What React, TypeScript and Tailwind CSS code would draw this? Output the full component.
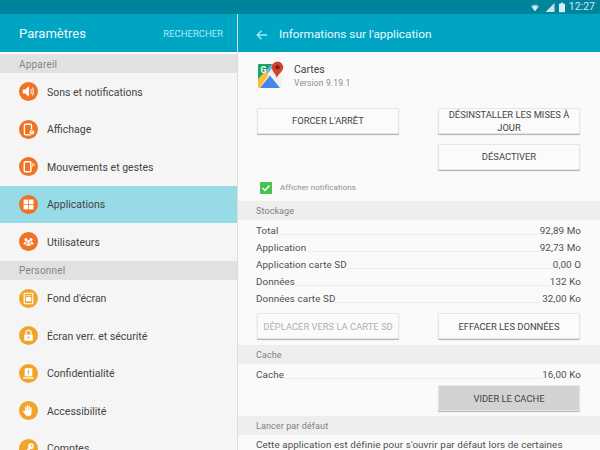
import React from "react";

function Speaker() {
  return (
    <svg viewBox="0 0 20 20" className="w-[19px] h-[19px]">
      <circle cx="10" cy="10" r="10" fill="#ee7322" />
      <path d="M4 7.800v4.400h2.500l4 3.300V4.500l-4 3.300z" fill="#fff" />
      <path d="M12.300 7q1.300 3 0 6M14.200 5.800q2.100 4.200 0 8.400" stroke="#fff" strokeOpacity="0.8" strokeWidth="1.200" fill="none" />
    </svg>
  );
}
function Display() {
  return (
    <svg viewBox="0 0 20 20" className="w-[19px] h-[19px]">
      <circle cx="10" cy="10" r="10" fill="#ee7322" />
      <rect x="5.700" y="4.500" width="7.500" height="11" rx="1" fill="none" stroke="#fff" strokeWidth="1.400" />
      <circle cx="13.500" cy="13" r="2.800" fill="#fff" stroke="#ee7322" strokeWidth="0.800" />
      <rect x="13.100" y="11.700" width="0.900" height="1.700" fill="#ee7322" />
    </svg>
  );
}
function Motion() {
  return (
    <svg viewBox="0 0 20 20" className="w-[19px] h-[19px]">
      <circle cx="10" cy="10" r="10" fill="#ee7322" />
      <rect x="5.500" y="5" width="7" height="10.500" rx="1" fill="none" stroke="#fff" strokeWidth="1.500" />
      <path d="M14.500 6.500v4M16 7v2" stroke="#fff" strokeWidth="1" />
    </svg>
  );
}
function Apps() {
  return (
    <svg viewBox="0 0 20 20" className="w-[19px] h-[19px]">
      <circle cx="10" cy="10" r="10" fill="#ee7322" />
      <rect x="4.800" y="4.800" width="4.800" height="4.800" fill="#fff" />
      <rect x="10.400" y="4.800" width="4.800" height="4.800" fill="#fff" />
      <rect x="4.800" y="10.400" width="4.800" height="4.800" fill="#fff" />
      <rect x="10.400" y="10.400" width="4.800" height="4.800" fill="#fff" />
    </svg>
  );
}
function Users() {
  return (
    <svg viewBox="0 0 20 20" className="w-[19px] h-[19px]">
      <circle cx="10" cy="10" r="10" fill="#ee7322" />
      <circle cx="7.300" cy="8" r="1.600" fill="#fff" />
      <circle cx="12.700" cy="8" r="1.600" fill="#fff" />
      <circle cx="10" cy="10" r="1.500" fill="#fff" />
      <path d="M4.500 13q.5-3 2.800-3 1 0 1.200.5-1.500 1-1.500 3zM15.500 13q-.5-3-2.800-3-1 0-1.200.5 1.500 1 1.500 3zM7.500 14.500q.3-3 2.500-3t2.500 3z" fill="#fff" />
    </svg>
  );
}
function Wallpaper() {
  return (
    <svg viewBox="0 0 20 20" className="w-[19px] h-[19px]">
      <circle cx="10" cy="10" r="10" fill="#f0a52a" />
      <rect x="5.500" y="4.500" width="9" height="11" rx="0.500" fill="none" stroke="#fff" strokeWidth="1.200" />
      <rect x="7.200" y="8.500" width="5.600" height="4.500" fill="#fff" />
      <rect x="7.200" y="6.500" width="5.600" height="1" fill="#fff" opacity="0.700" />
    </svg>
  );
}
function Lock() {
  return (
    <svg viewBox="0 0 20 20" className="w-[19px] h-[19px]">
      <circle cx="10" cy="10" r="10" fill="#f0a52a" />
      <rect x="5.500" y="9" width="9" height="6.500" rx="0.700" fill="#fff" />
      <path d="M7.300 9V7.300a2.700 2.700 0 0 1 5.400 0V9" fill="none" stroke="#fff" strokeWidth="1.300" />
      <circle cx="10" cy="12" r="1" fill="#f0a52a" />
    </svg>
  );
}
function Privacy() {
  return (
    <svg viewBox="0 0 20 20" className="w-[19px] h-[19px]">
      <circle cx="10" cy="10" r="10" fill="#f0a52a" />
      <rect x="6" y="4.500" width="8" height="8.500" fill="#fff" />
      <rect x="4.500" y="14" width="11" height="1.400" fill="#fff" />
      <rect x="9.300" y="6.500" width="1.400" height="3" fill="#f0a52a" />
      <rect x="9.300" y="10.200" width="1.400" height="1.300" fill="#f0a52a" />
    </svg>
  );
}
function Hand() {
  return (
    <svg viewBox="0 0 20 20" className="w-[19px] h-[19px]">
      <circle cx="10" cy="10" r="10" fill="#f0a52a" />
      <path d="M6.400 11V6.500a.7.7 0 0 1 1.400 0V10h.4V5a.7.7 0 0 1 1.400 0v5h.4V5.400a.7.7 0 0 1 1.400 0V10.300h.4V7a.7.7 0 0 1 1.400 0v5.500q0 3.500-3.500 3.500-2 0-3-1.500L4.500 11.500q-.5-1 .3-1.300.6-.2 1 .3z" fill="#fff" />
    </svg>
  );
}
function Key() {
  return (
    <svg viewBox="0 0 20 20" className="w-[19px] h-[19px]">
      <circle cx="10" cy="10" r="10" fill="#f0a52a" />
      <circle cx="12.500" cy="7.500" r="3" fill="#fff" />
      <path d="M11 8.500l-6 6 1.500 1.300 1-1 1 1 1-1-1-1 3.500-3.500z" fill="#fff" />
      <circle cx="13" cy="7" r="0.900" fill="#f0a52a" />
    </svg>
  );
}

function MapsIcon() {
  return (
    <svg viewBox="0 0 26 27" className="w-[26px] h-[27px] shrink-0 self-start">
      <rect x="0" y="3" width="23.500" height="24" rx="1" fill="#f1f1f1" />
      <path d="M0 4q0-1 1-1h13.500L0 18.500z" fill="#1ea362" />
      <path d="M14.500 3h3L9.500 13 7 10.500z" fill="#7daaf0" />
      <path d="M0 18.500L7 10.500l3.500 3.500L1.500 27Q0 27 0 25.500z" fill="#fbc02d" />
      <path d="M2 27l10-12.500L22 27z" fill="#4a86e8" />
      <text x="2.500" y="12" fontSize="8.500" fontWeight="700" fill="#fff" fontFamily="Roboto, sans-serif">G</text>
      <path d="M19.500 .5a5.800 5.800 0 0 0-5.800 5.800c0 4.200 5 7.500 5 11 .6-3.500 6.600-6.800 6.600-11A5.800 5.800 0 0 0 19.500 .5z" fill="#d8402f" />
      <circle cx="19.500" cy="6.300" r="2.200" fill="#7b2318" />
    </svg>
  );
}

function Row({ icon, label, active }: { icon: React.ReactNode; label: string; active?: boolean }) {
  return (
    <div className={`h-[37.5px] shrink-0 flex items-center pl-[19px] gap-[9px] text-[10.500px] text-[#444] ${active ? "bg-[#97dbe7]" : ""}`}>
      {icon}
      <span className="pt-[2px]">{label}</span>
    </div>
  );
}

function LeftHead({ children }: { children: string }) {
  return (
    <div className="h-[19px] shrink-0 flex items-center pl-[19px] pt-[1px] text-[10px] tracking-[0.2px] bg-[#e1e1e1] text-[#858585]">{children}</div>
  );
}

function RightHead({ children }: { children: string }) {
  return (
    <div className="h-[19px] shrink-0 flex items-center pl-[18px] pt-[2px] text-[9px] tracking-[0.1px] bg-[#eeeeee] text-[#808080]">{children}</div>
  );
}

function Btn({ children, disabled, pressed }: { children: React.ReactNode; disabled?: boolean; pressed?: boolean }) {
  return (
    <div
      className={`w-[142px] h-[26px] shrink-0 flex items-center justify-center text-center text-[9.400px] leading-[13px] rounded-[1px] border border-[#e6e6e6] shadow-[0_1px_1px_rgba(0,0,0,0.3)] ${
        pressed ? "bg-[#d2d2d2]" : "bg-[#fbfbfb]"
      } ${disabled ? "text-[#b0b0b0]" : "text-[#444]"}`}
    >
      {children}
    </div>
  );
}

function Stat({ label, value }: { label: string; value: string }) {
  return (
    <div className="h-[17px] shrink-0 flex items-end text-[9.800px] tracking-[0.1px] text-[#4f4f4f] leading-[15px]">
      <span>{label}</span>
      <span className="flex-1 border-b border-[#ececec] mb-[3px]" />
      <span>{value}</span>
    </div>
  );
}

export default function App() {
  return (
    <div className="w-[600px] h-[450px] overflow-hidden flex flex-col bg-[#fafafa] font-['Roboto',sans-serif]">
      <div className="h-[14px] shrink-0 bg-[#00849c] flex items-center justify-end pr-[5px] gap-[4px]">
        <svg viewBox="0 0 12 10" className="w-[10px] h-[9px]">
          <path d="M1 3.500a7 7 0 0 1 10 0L6 9.500z" fill="#7fc4d2" />
          <path d="M2.800 4.800a4.500 4.500 0 0 1 6.400 0L6 9.500z" fill="#d5eef3" />
        </svg>
        <svg viewBox="0 0 10 10" className="w-[10px] h-[10px] ml-[1px]">
          <path d="M0.500 10L9.500 1v9z" fill="#c5e5ec" />
        </svg>
        <svg viewBox="0 0 7 11" className="w-[6px] h-[11px]">
          <path d="M2 0h3v1h1.500q.5 0 .5.500V11H0V1.500Q0 1 .5 1H2z" fill="#d5eef3" />
        </svg>
        <span className="text-[10.500px] leading-none text-[#cfeaf0]">12:27</span>
      </div>
      <div className="flex-1 min-h-0 flex">
        <div className="w-[237px] shrink-0 flex flex-col overflow-hidden bg-[#f5f5f5]">
          <div className="h-[38px] shrink-0 bg-[#00a5c4] flex items-center justify-between pl-[19px] pr-[14px] pt-[2px]">
            <span className="text-[13px] text-[#eafafd]">Paramètres</span>
            <span className="text-[9.500px] text-[#a8ecf6]">RECHERCHER</span>
          </div>
          <div className="h-[2px] shrink-0 bg-white" />
          <LeftHead>Appareil</LeftHead>
          <Row icon={<Speaker />} label="Sons et notifications" />
          <Row icon={<Display />} label="Affichage" />
          <Row icon={<Motion />} label="Mouvements et gestes" />
          <Row icon={<Apps />} label="Applications" active />
          <Row icon={<Users />} label="Utilisateurs" />
          <LeftHead>Personnel</LeftHead>
          <Row icon={<Wallpaper />} label="Fond d'écran" />
          <Row icon={<Lock />} label="Écran verr. et sécurité" />
          <Row icon={<Privacy />} label="Confidentialité" />
          <Row icon={<Hand />} label="Accessibilité" />
          <Row icon={<Key />} label="Comptes" />
        </div>
        <div className="w-px shrink-0 bg-[#dcdcdc]" />
        <div className="flex-1 min-w-0 flex flex-col overflow-hidden">
          <div className="h-[38px] shrink-0 bg-[#00a5c4] flex items-center pl-[18px] gap-[12px] pt-[3px]">
            <svg viewBox="0 0 11 10" className="w-[11px] h-[10px]">
              <path d="M11 5H1.500M5.500 .8L1.200 5l4.300 4.200" stroke="#a8ecf6" strokeWidth="1.300" fill="none" />
            </svg>
            <span className="text-[11.800px] text-[#eafafd]">Informations sur l'application</span>
          </div>
          <div className="flex flex-col pt-[9px]">
            <div className="flex items-start pl-[20px] gap-[10px] h-[27px] shrink-0">
              <MapsIcon />
              <div className="flex flex-col pt-[2px]">
                <span className="text-[10.500px] leading-[14px] text-[#444]">Cartes</span>
                <span className="text-[8.500px] leading-[12px] tracking-[0.15px] text-[#8c8c8c]">Version 9.19.1</span>
              </div>
            </div>
            <div className="flex justify-between pl-[19px] pr-[20px] mt-[19.5px]">
              <div className="flex flex-col">
                <Btn>FORCER L'ARRÊT</Btn>
              </div>
              <div className="flex flex-col gap-[10px]">
                <Btn>DÉSINSTALLER LES MISES À JOUR</Btn>
                <Btn>DÉSACTIVER</Btn>
              </div>
            </div>
            <div className="flex items-center gap-[8px] pl-[22px] mt-[11.5px] h-[13px] shrink-0">
              <div className="w-[12px] h-[12px] bg-[#49c24f] flex items-center justify-center rounded-[1px]">
                <svg viewBox="0 0 12 12" className="w-[12px] h-[12px]">
                  <path d="M2.500 6l2.500 2.500 4.500-5" stroke="#fff" strokeWidth="1.400" fill="none" />
                </svg>
              </div>
              <span className="text-[7.900px] tracking-[0.1px] text-[#8c8c8c]">Afficher notifications</span>
            </div>
            <div className="mt-[7px]"><RightHead>Stockage</RightHead></div>
            <div className="pl-[18px] pr-[19px] flex flex-col pt-[1px]">
              <Stat label="Total" value="92,89 Mo" />
              <Stat label="Application" value="92,73 Mo" />
              <Stat label="Application carte SD" value="0,00 O" />
              <Stat label="Données" value="132 Ko" />
              <Stat label="Données carte SD" value="32,00 Ko" />
            </div>
            <div className="flex justify-between pl-[19px] pr-[20px] mt-[7px]">
              <Btn disabled>DÉPLACER VERS LA CARTE SD</Btn>
              <Btn>EFFACER LES DONNÉES</Btn>
            </div>
            <div className="mt-[6px]"><RightHead>Cache</RightHead></div>
            <div className="pl-[18px] pr-[19px] pt-[1px]">
              <Stat label="Cache" value="16,00 Ko" />
            </div>
            <div className="flex justify-end pr-[20px] mt-[3px]">
              <Btn pressed>VIDER LE CACHE</Btn>
            </div>
            <div className="mt-[5px]"><RightHead>Lancer par défaut</RightHead></div>
            <div className="pl-[18px] pt-[3px] text-[9.800px] tracking-[0.1px] text-[#4f4f4f] leading-[14px] whitespace-nowrap">
              Cette application est définie pour s'ouvrir par défaut lors de certaines
            </div>
          </div>
        </div>
      </div>
    </div>
  );
}
